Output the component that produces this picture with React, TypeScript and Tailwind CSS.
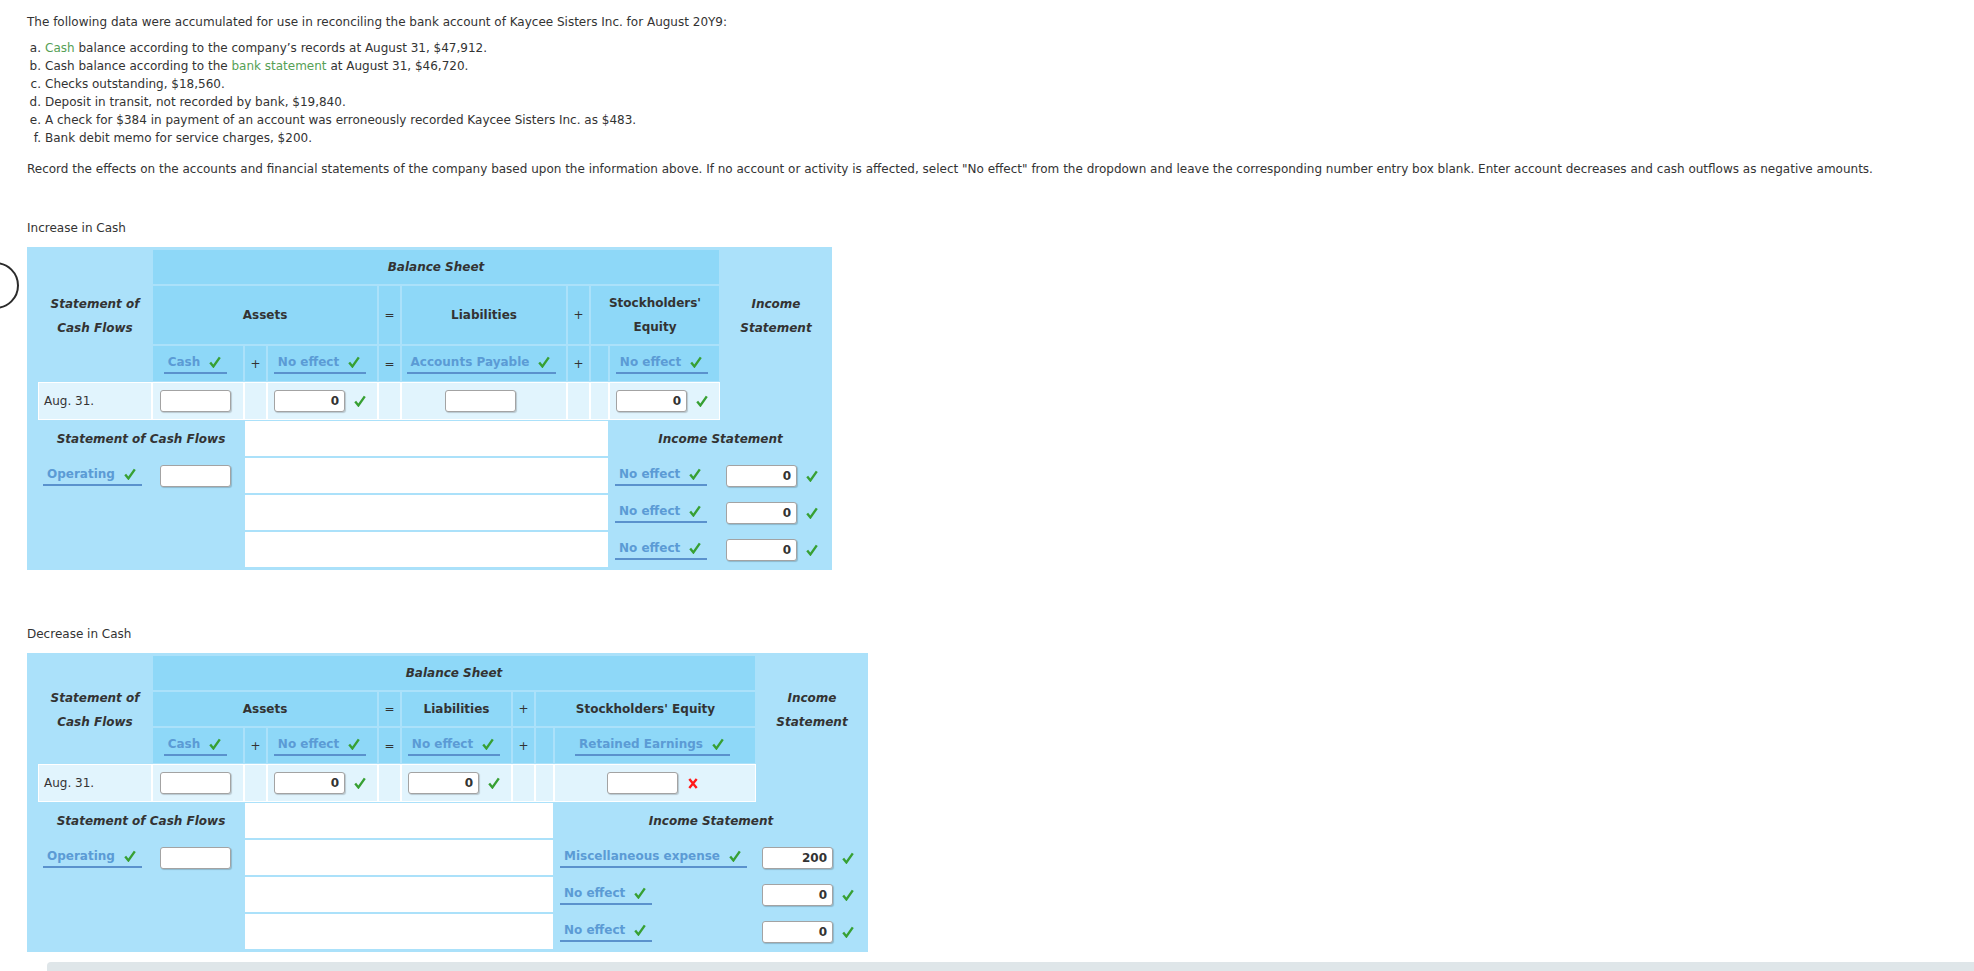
import React from "react";

const Check = () => (
  <svg width="12" height="12" viewBox="0 0 12 12" className="shrink-0">
    <path d="M1.2 6.4 L4.4 10.4 L10.8 1.4" fill="none" stroke="#37a033" strokeWidth="2.4" strokeLinejoin="miter" />
  </svg>
);

const RedX = () => (
  <svg width="10" height="11" viewBox="0 0 10 11" className="shrink-0">
    <path d="M1.3 1 L8.7 10 M8.7 1 L1.3 10" fill="none" stroke="#ff1a1a" strokeWidth="2.4" />
  </svg>
);

const Dd = ({ label }: { label: string }) => (
  <span className="inline-flex items-center gap-[9px] border-b-2 border-[#5a92cd] pl-[4px] pr-[6px] pb-[1px] font-bold text-[#5b9bd5] leading-[18px] whitespace-nowrap">
    {label}
    <Check />
  </span>
);

const Box = ({ value }: { value?: string }) => (
  <div className="w-[71px] h-[22px] shrink-0 bg-white border border-[#a3a3a3] rounded-[3px] shadow-[1px_1px_1px_rgba(0,0,0,0.18)] flex items-center justify-end pr-[5px] font-bold text-[12px] text-[#333]">
    {value}
  </div>
);

const hdr = "border border-[#abe1fa] bg-[#8ed8f8] flex items-center justify-center text-center";
const dat = "border border-white bg-[#e1f4fd] flex items-center";
const wht = "border border-[#abe1fa] bg-white";

type Variant = 1 | 2;

function Table({ v }: { v: Variant }) {
  const cols =
    v === 1
      ? "grid grid-cols-[114px_92px_23px_111px_23px_166px_23px_19px_111px_112px] grid-rows-[36px_60px_37px_38px_37px_37px_37px_37px]"
      : "grid grid-cols-[114px_92px_23px_111px_23px_111px_23px_19px_202px_112px] grid-rows-[36px_36px_37px_38px_37px_37px_37px_37px]";
  return (
    <div className="self-start bg-[#abe1fa] pl-[11px] pt-[2px] pb-[2px] text-[12px] text-[#333]">
      <div className={cols}>
        {/* left header */}
        <div className="col-start-1 row-start-1 row-span-3 flex items-center justify-center text-center font-bold italic leading-[24px]">
          <div>
            Statement of
            <br />
            Cash Flows
          </div>
        </div>
        <div className={`col-start-2 col-span-8 row-start-1 font-bold italic ${hdr}`}>Balance Sheet</div>
        <div className="col-start-10 row-start-1 row-span-3 flex items-center justify-center text-center font-bold italic leading-[24px]">
          <div>
            Income
            <br />
            Statement
          </div>
        </div>

        {/* row 2 */}
        <div className={`col-start-2 col-span-3 row-start-2 font-bold ${hdr}`}>Assets</div>
        <div className={`col-start-5 row-start-2 ${hdr}`}>=</div>
        <div className={`col-start-6 row-start-2 font-bold ${hdr}`}>Liabilities</div>
        <div className={`col-start-7 row-start-2 ${hdr}`}>+</div>
        <div className={`col-start-8 col-span-2 row-start-2 font-bold leading-[24px] ${hdr}`}>
          {v === 1 ? (
            <div>
              Stockholders&apos;
              <br />
              Equity
            </div>
          ) : (
            <div>Stockholders&apos; Equity</div>
          )}
        </div>

        {/* row 3 */}
        <div className={`col-start-2 row-start-3 pr-[5px] ${hdr}`}>
          <Dd label="Cash" />
        </div>
        <div className={`col-start-3 row-start-3 ${hdr}`}>+</div>
        <div className={`col-start-4 row-start-3 pr-[5px] ${hdr}`}>
          <Dd label="No effect" />
        </div>
        <div className={`col-start-5 row-start-3 ${hdr}`}>=</div>
        <div className={`col-start-6 row-start-3 pr-[5px] ${hdr}`}>
          <Dd label={v === 1 ? "Accounts Payable" : "No effect"} />
        </div>
        <div className={`col-start-7 row-start-3 ${hdr}`}>+</div>
        <div className={`col-start-8 row-start-3 ${hdr}`}></div>
        <div className={`col-start-9 row-start-3 pr-[5px] ${hdr}`}>
          <Dd label={v === 1 ? "No effect" : "Retained Earnings"} />
        </div>

        {/* row 4 data */}
        <div className={`col-start-1 row-start-4 pl-[5px] ${dat}`}>Aug. 31.</div>
        <div className={`col-start-2 row-start-4 pl-[7px] ${dat}`}>
          <Box />
        </div>
        <div className={`col-start-3 row-start-4 ${dat}`}></div>
        <div className={`col-start-4 row-start-4 pl-[6px] gap-[9px] ${dat}`}>
          <Box value="0" />
          <Check />
        </div>
        <div className={`col-start-5 row-start-4 ${dat}`}></div>
        {v === 1 ? (
          <div className={`col-start-6 row-start-4 pl-[43px] ${dat}`}>
            <Box />
          </div>
        ) : (
          <div className={`col-start-6 row-start-4 pl-[6px] gap-[9px] ${dat}`}>
            <Box value="0" />
            <Check />
          </div>
        )}
        <div className={`col-start-7 row-start-4 ${dat}`}></div>
        <div className={`col-start-8 row-start-4 ${dat}`}></div>
        {v === 1 ? (
          <div className={`col-start-9 row-start-4 pl-[6px] gap-[9px] ${dat}`}>
            <Box value="0" />
            <Check />
          </div>
        ) : (
          <div className={`col-start-9 row-start-4 pl-[52px] gap-[10px] ${dat}`}>
            <Box />
            <RedX />
          </div>
        )}

        {/* lower section */}
        <div className="col-start-1 col-span-2 row-start-5 flex items-center justify-center font-bold italic">
          Statement of Cash Flows
        </div>
        <div className="col-start-1 row-start-6 flex items-center pl-[5px]">
          <Dd label="Operating" />
        </div>
        <div className="col-start-2 row-start-6 flex items-center pl-[8px]">
          <Box />
        </div>

        <div className={`col-start-3 col-span-6 row-start-5 ${wht}`}></div>
        <div className={`col-start-3 col-span-6 row-start-6 ${wht}`}></div>
        <div className={`col-start-3 col-span-6 row-start-7 ${wht}`}></div>
        <div className={`col-start-3 col-span-6 row-start-8 ${wht}`}></div>

        <div className="col-start-9 col-span-2 row-start-5 flex items-center justify-center font-bold italic">
          Income Statement
        </div>
        <div className="col-start-9 col-span-2 row-start-6 flex items-center justify-between pl-[6px] pr-[14px]">
          <Dd label={v === 1 ? "No effect" : "Miscellaneous expense"} />
          <div className="flex items-center gap-[9px]">
            <Box value={v === 1 ? "0" : "200"} />
            <Check />
          </div>
        </div>
        <div className="col-start-9 col-span-2 row-start-7 flex items-center justify-between pl-[6px] pr-[14px]">
          <Dd label="No effect" />
          <div className="flex items-center gap-[9px]">
            <Box value="0" />
            <Check />
          </div>
        </div>
        <div className="col-start-9 col-span-2 row-start-8 flex items-center justify-between pl-[6px] pr-[14px]">
          <Dd label="No effect" />
          <div className="flex items-center gap-[9px]">
            <Box value="0" />
            <Check />
          </div>
        </div>
      </div>
    </div>
  );
}

const Item = ({ l, children }: { l: string; children: React.ReactNode }) => (
  <div className="flex whitespace-nowrap">
    <span className="inline-block w-[14px] text-right">{l}</span>
    <span className="ml-[4px]">{children}</span>
  </div>
);

export default function App() {
  return (
    <div className="relative h-[971px] w-full overflow-hidden bg-white font-['DejaVu_Sans',Verdana,sans-serif] text-[12px] leading-[18px] text-[#333]">
      <div className="absolute left-[-28px] top-[262px] w-[47px] h-[47px] rounded-full border-[2.5px] border-[#2b2b2b] bg-white flex items-center justify-end">
        <svg width="6" height="22" viewBox="0 0 6 22" className="mr-[22px]">
          <path d="M0 2 H3 V20 H0" fill="none" stroke="#2b2b2b" strokeWidth="1.6" />
        </svg>
      </div>
      <div className="flex flex-col pl-[27px] pt-[13px]">
        <div className="whitespace-nowrap">
          The following data were accumulated for use in reconciling the bank account of Kaycee Sisters Inc. for August 20Y9:
        </div>
        <div className="mt-[8px] flex flex-col">
          <Item l="a.">
            <span className="text-[#55a055]">Cash</span> balance according to the company’s records at August 31, $47,912.
          </Item>
          <Item l="b.">
            Cash balance according to the <span className="text-[#55a055]">bank statement</span> at August 31, $46,720.
          </Item>
          <Item l="c.">Checks outstanding, $18,560.</Item>
          <Item l="d.">Deposit in transit, not recorded by bank, $19,840.</Item>
          <Item l="e.">A check for $384 in payment of an account was erroneously recorded Kaycee Sisters Inc. as $483.</Item>
          <Item l="f.">Bank debit memo for service charges, $200.</Item>
        </div>
        <div className="mt-[13px] whitespace-nowrap">
          Record the effects on the accounts and financial statements of the company based upon the information above. If no account or activity is affected, select "No effect" from the dropdown and leave the corresponding number entry box blank. Enter account decreases and cash outflows as negative amounts.
        </div>
        <div className="mt-[41px]">Increase in Cash</div>
        <div className="mt-[10px] flex">
          <Table v={1} />
        </div>
        <div className="mt-[55px]">Decrease in Cash</div>
        <div className="mt-[10px] flex">
          <Table v={2} />
        </div>
        <div className="mt-[10px] ml-[20px] h-[40px] rounded-tl-[4px] bg-[#dfe6e9]"></div>
      </div>
    </div>
  );
}
